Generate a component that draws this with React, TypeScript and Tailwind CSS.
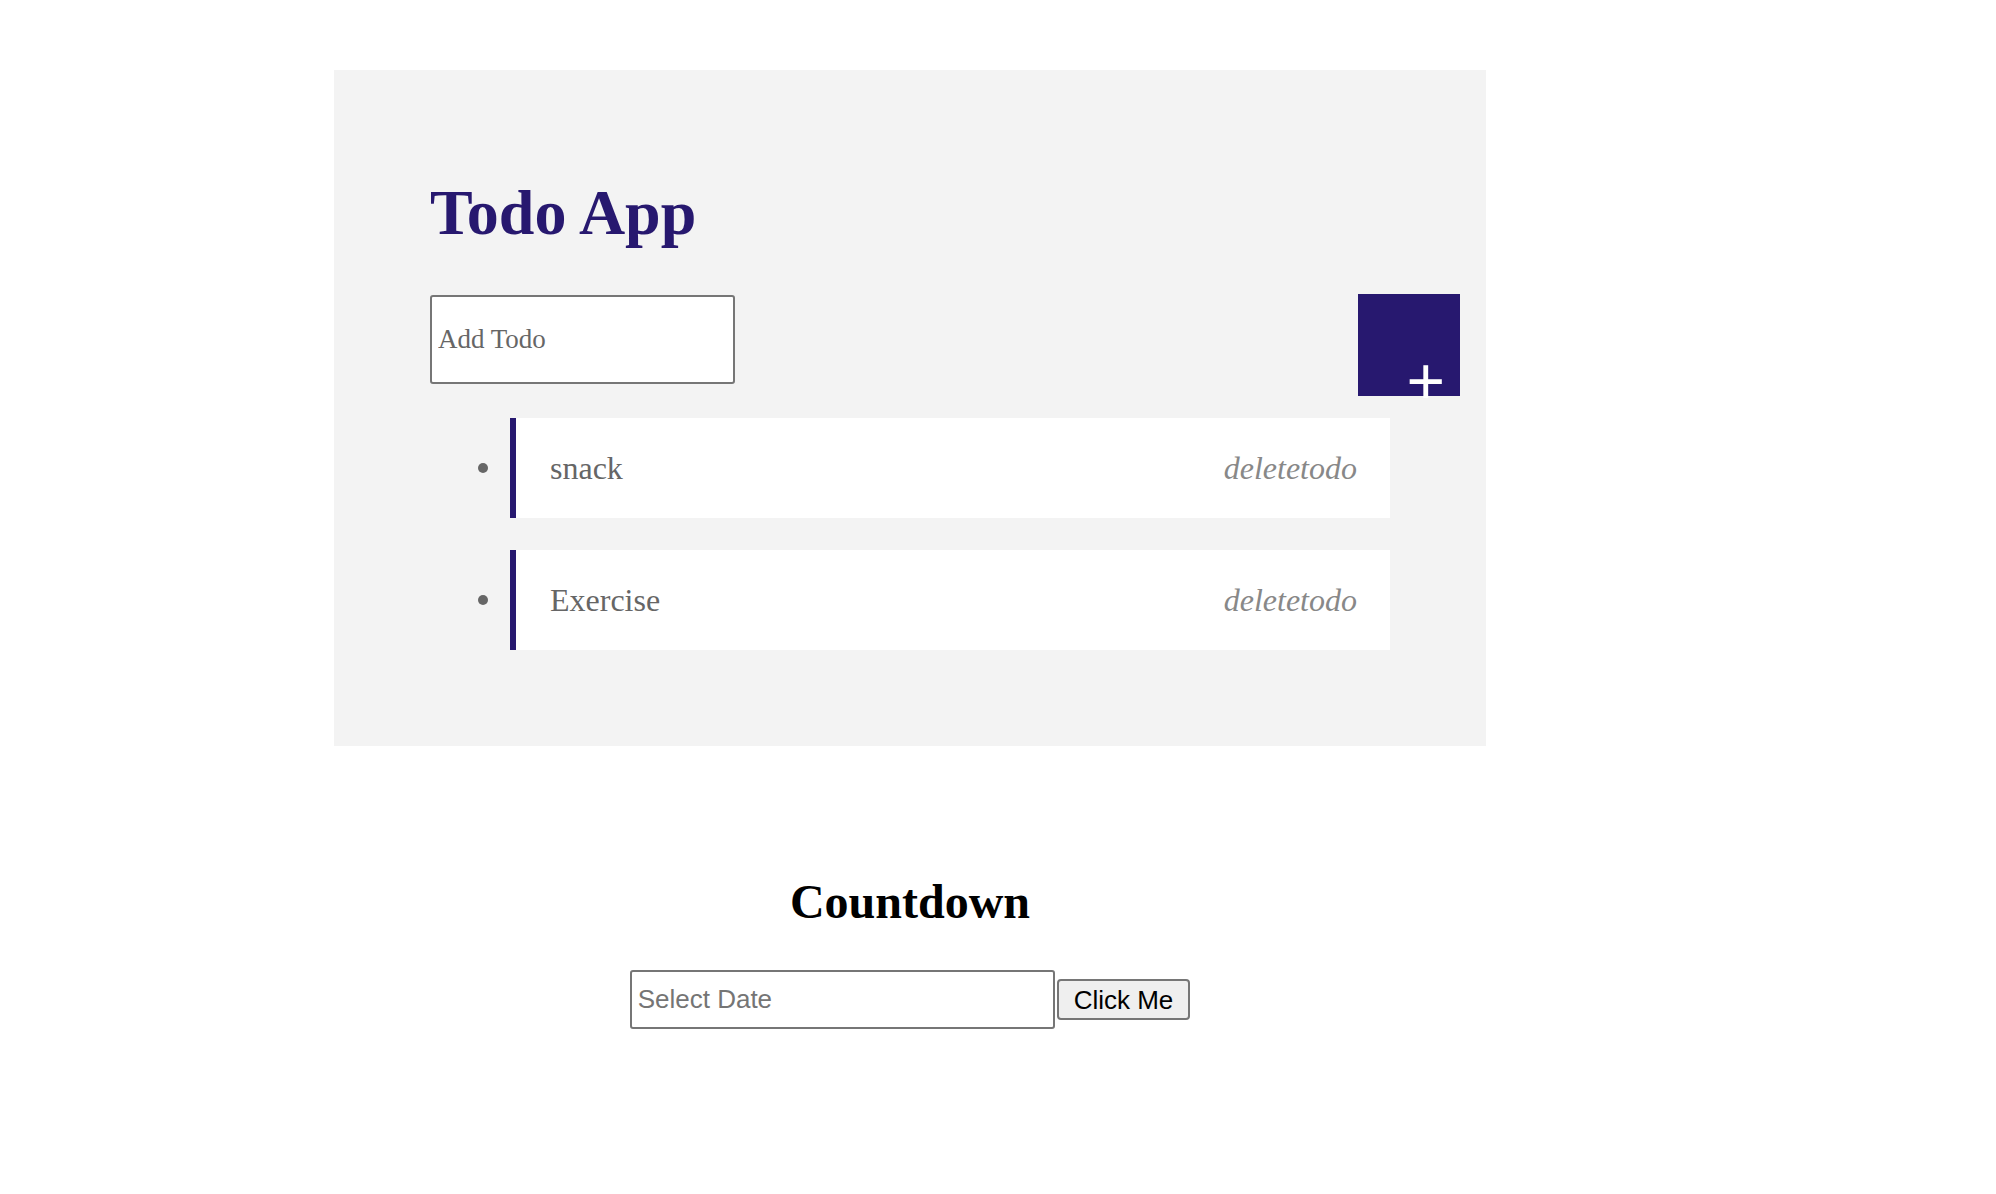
import { useState } from "react";

const todos = ["snack", "Exercise"];

export default function App() {
  const [items, setItems] = useState(todos);

  return (
    <div className="w-[1820px] bg-white pt-[70px] pb-[160px] font-['Liberation_Serif',serif]">
      <div className="mx-auto w-[1152px] bg-[#f3f3f3] p-[96px]">
        <h1 className="mt-[15px] text-[64px] leading-none font-bold text-[#27186f]">Todo App</h1>

        <div className="mt-[49px] flex items-start justify-between mr-[-70px]">
          <input
            placeholder="Add Todo"
            className="mt-[1px] h-[89px] w-[305px] rounded-[3px] border-2 border-[#767676] bg-white px-[6px] text-[27px] text-[#555] placeholder:text-[#666] outline-none"
          />
          <button className="flex h-[102px] w-[102px] items-end justify-end bg-[#27186f] pr-[15px] font-['Liberation_Sans',sans-serif] text-[66px] leading-none text-white">
            <span className="mb-[-18px]">+</span>
          </button>
        </div>

        <ul className="mt-[22px] flex flex-col gap-[32px] pl-[48px] text-[#666]">
          {items.map(item => (
            <li key={item} className="flex items-center gap-[22px] text-[32px]">
              <span className="h-[10px] w-[10px] shrink-0 rounded-full bg-[#666]" />
              <div className="flex h-[100px] flex-1 items-center justify-between border-l-[6px] border-[#27186f] bg-white pl-[34px] pr-[33px] leading-none">
                <span className="text-[#666]">{item}</span>
                <span
                  className="cursor-pointer italic text-[#888]"
                  onClick={() => setItems(items.filter(i => i !== item))}
                >
                  deletetodo
                </span>
              </div>
            </li>
          ))}
        </ul>
      </div>

      <div className="mt-[132px] flex flex-col items-center">
        <h2 className="text-[48px] leading-none font-bold text-black">Countdown</h2>
        <div className="mt-[44px] flex items-center gap-[2px] font-['Liberation_Sans',sans-serif]">
          <input
            placeholder="Select Date"
            className="h-[59px] w-[425px] rounded-[3px] border-2 border-[#767676] bg-white px-[6px] text-[26px] placeholder:text-[#757575] outline-none"
          />
          <button className="h-[41px] rounded-[4px] border-2 border-[#767676] bg-[#efefef] px-[15px] text-[26px] leading-none text-black">
            Click Me
          </button>
        </div>
      </div>
    </div>
  );
}
